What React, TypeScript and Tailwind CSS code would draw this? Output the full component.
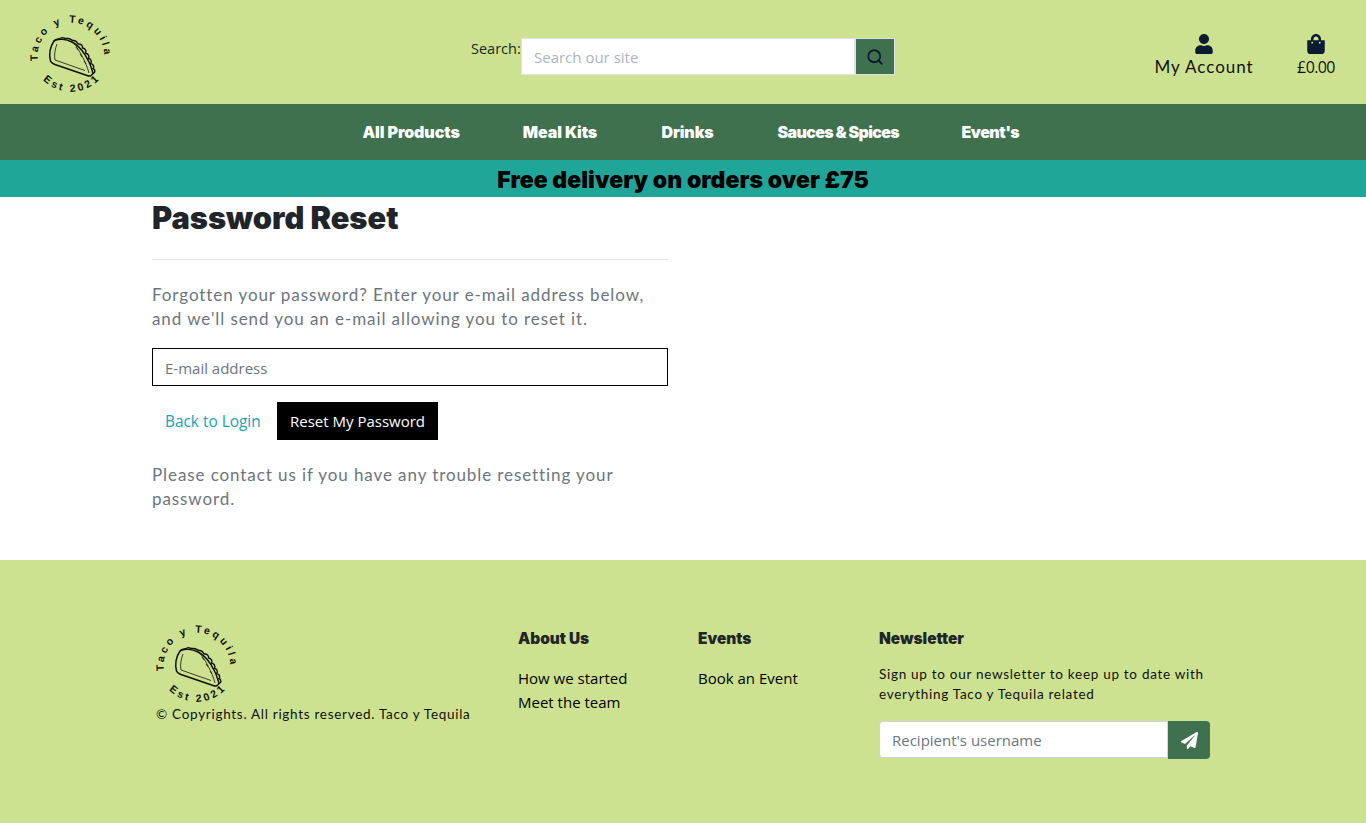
import React from 'react';
import { Search } from 'lucide-react';
import { FaUser, FaShoppingBag, FaPaperPlane } from 'react-icons/fa';

const navLinks = [
  { label: 'All Products', className: 'w-[97px] tracking-[-0.1px]' },
  { label: 'Meal Kits', className: 'w-[75px] tracking-[-0.1px]' },
  { label: 'Drinks', className: 'w-[54px] tracking-[-0.1px]' },
  { label: 'Sauces & Spices', className: 'w-[121px] tracking-[-0.65px]' },
  { label: "Event's", className: 'w-[57px] tracking-[-0.5px]' },
];

const Logo: React.FC<{ id: string }> = ({ id }) => (
  <svg viewBox="0 0 82 82" className="w-[82px] h-[82px] shrink-0 overflow-visible" fill="none" stroke="#111">
    <defs>
      <path id={`${id}-top`} d="M 8.5 48 A 33.2 33.2 0 1 1 70 57" />
      <path id={`${id}-bottom`} d="M 6 55 A 39 39 0 0 0 76 55" />
    </defs>
    <text fontFamily="'Liberation Sans Narrow', 'Liberation Sans', sans-serif" fontSize="10.5" fontWeight="700" letterSpacing="2.8" fill="#111" stroke="none">
      <textPath href={`#${id}-top`} startOffset="2">Taco y Tequila</textPath>
    </text>
    <text fontFamily="'Liberation Sans Narrow', 'Liberation Sans', sans-serif" fontSize="10.5" fontWeight="700" letterSpacing="2.8" fill="#111" stroke="none">
      <textPath href={`#${id}-bottom`} startOffset="12">Est  2021</textPath>
    </text>
    {/* taco shell */}
    <path strokeWidth="1.5" d="M24 26 C20 32 19 40 20.5 46 C21 48 23 48.5 25 49.5 L57 60.5 C60 61.5 62 61 63 58 C60 46 52 32 42 27 C36 24 28 23 24 26 Z" />
    <path strokeWidth="0.8" d="M27 29 C25 34 24 40 25 45 L55 55.5" />
    {/* filling along the top edge */}
    <path strokeWidth="1.4" d="M24 26 C26 23 29 24.5 31 23 C33 21.5 35 24 37 23.5 C40 23 41 25 43 25.5 C46 25 47 27 48 29 C51 28.5 53 31 52.5 33 C55.5 33.5 56.5 36 55.5 38 C58.5 39 59.5 41 58.5 43.5 C61.5 44 62 47 60.5 48.5 C63.5 49 64.5 52 63 53.5 C65.5 54.5 65.5 58 63 58.5" />
    <path strokeWidth="0.8" d="M46 32 L48 35 M50 39 L52 42 M54 46 L56 49 M43 27 C50 36 56 47 59 58" />
  </svg>
);

const headingFont = "font-['Inter',sans-serif]";

export default function App() {
  return (
    <div className="min-h-[823px] bg-white flex flex-col font-['Open_Sans',sans-serif]">
      {/* header */}
      <header className="h-[104px] bg-[#cde290] flex items-start">
        <div className="pl-[30px] pt-[15px] w-[471px]">
          <Logo id="head" />
        </div>
        <form className="flex items-start pt-[38px] w-[424px]" onSubmit={(e) => e.preventDefault()}>
          <label className="w-[50px] -mt-[1px] text-[14.5px] leading-[24px] text-[#212529] whitespace-nowrap">Search:</label>
          <input
            placeholder="Search our site"
            className="w-[334px] h-[37px] bg-white border border-[#dee2e6] px-3 text-[15px] text-[#212529] placeholder:text-[#a9b4c2] outline-none"
          />
          <button className="w-[40px] h-[37px] bg-[#40714f] border border-[#dee2e6] flex items-center justify-center">
            <Search className="w-[18px] h-[18px] text-[#0b1b33]" strokeWidth={2.4} />
          </button>
        </form>
        <div className="flex-1 flex justify-end pt-[34px]">
          <a className="flex flex-col items-center w-[98px] text-[#111] text-[17px] leading-[22px] font-['Lato',sans-serif] tracking-[0.95px]">
            <FaUser className="w-[18px] h-[20px] text-[#0b1b33]" />
            <span className="mt-[2px] whitespace-nowrap">My Account</span>
          </a>
          <a className="flex flex-col items-center ml-[44px] mr-[31px] w-[38px] text-[#111] text-[16px] leading-[22px]">
            <FaShoppingBag className="w-[18px] h-[20px] text-[#0b1b33]" />
            <span className="mt-[2px] tracking-[-0.6px]">£0.00</span>
          </a>
        </div>
      </header>

      {/* nav */}
      <nav className="h-[56px] bg-[#40714f] flex items-center justify-center gap-[63px] pl-[15px]">
        {navLinks.map((link) => (
          <a
            key={link.label}
            className={`${link.className} text-center whitespace-nowrap text-white text-[16px] font-black ${headingFont}`}
          >
            {link.label}
          </a>
        ))}
      </nav>

      <div className={`h-[37px] bg-[#20a599] text-center text-black text-[23px] leading-[41px] font-black tracking-[0.05px] ${headingFont}`}>
        Free delivery on orders over £75
      </div>

      {/* reset form */}
      <main className="h-[363px] pl-[152px]">
        <div className="w-[516px]">
          <h1 className={`h-[62px] text-[30.8px] leading-[42px] font-black text-[#212529] ${headingFont}`}>
            Password Reset
          </h1>
          <hr className="border-t border-[#e5e5e5]" />
          <p className="mt-[23px] text-[17px] leading-[24px] text-[#6c757d] tracking-[0.92px] font-['Lato',sans-serif]">
            Forgotten your password? Enter your e-mail address below, and we'll send you an e-mail allowing you to reset it.
          </p>
          <input
            placeholder="E-mail address"
            className="mt-[17px] w-full h-[38px] border border-black px-3 pt-[1px] text-[15px] text-[#212529] placeholder:text-[#6c757d] outline-none"
          />
          <div className="mt-[16px] flex items-center">
            <a className="pl-[13px] pt-[1px] w-[125px] text-[15.4px] text-[#17a2b8]">Back to Login</a>
            <button className="w-[161px] h-[38px] bg-black text-white text-[15px]">Reset My Password</button>
          </div>
          <p className="mt-[23px] text-[17px] leading-[24px] text-[#6c757d] tracking-[0.91px] font-['Lato',sans-serif]">
            Please contact us if you have any trouble resetting your password.
          </p>
        </div>
      </main>

      {/* footer */}
      <footer className="h-[263px] bg-[#cde290] pl-[156px] pt-[65px] grid grid-cols-[362px_180px_181px_331px] text-black">
        <div>
          <Logo id="foot" />
          <p className="-mt-[3px] text-[13.5px] leading-[20px] tracking-[0.71px] text-[#111] whitespace-nowrap font-['Lato',sans-serif]">
            © Copyrights. All rights reserved. Taco y Tequila
          </p>
        </div>
        <div className="pt-[2px]">
          <h5 className={`text-[15.4px] leading-[24px] font-black text-[#212529] ${headingFont}`}>About Us</h5>
          <ul className="mt-[15px] text-[15px] leading-[24px]">
            <li>How we started</li>
            <li>Meet the team</li>
          </ul>
        </div>
        <div className="pt-[2px]">
          <h5 className={`text-[15.4px] leading-[24px] font-black text-[#212529] ${headingFont}`}>Events</h5>
          <ul className="mt-[15px] text-[15px] leading-[24px]">
            <li>Book an Event</li>
          </ul>
        </div>
        <div className="pt-[2px]">
          <h5 className={`text-[15.4px] leading-[24px] font-black text-[#212529] ${headingFont}`}>Newsletter</h5>
          <p className="mt-[13px] text-[13.5px] leading-[20px] tracking-[0.71px] text-[#111] font-['Lato',sans-serif]">
            Sign up to our newsletter to keep up to date with everything Taco y Tequila related
          </p>
          <div className="mt-[17px] flex">
            <input
              placeholder="Recipient's username"
              className="w-[289px] h-[37px] bg-white border border-[#ced4da] rounded-l px-3 text-[15px] placeholder:text-[#6c757d] outline-none"
            />
            <button className="w-[42px] h-[38px] bg-[#40714f] rounded-r flex items-center justify-center">
              <FaPaperPlane className="w-[17px] h-[17px] text-white" />
            </button>
          </div>
        </div>
      </footer>
    </div>
  );
}
